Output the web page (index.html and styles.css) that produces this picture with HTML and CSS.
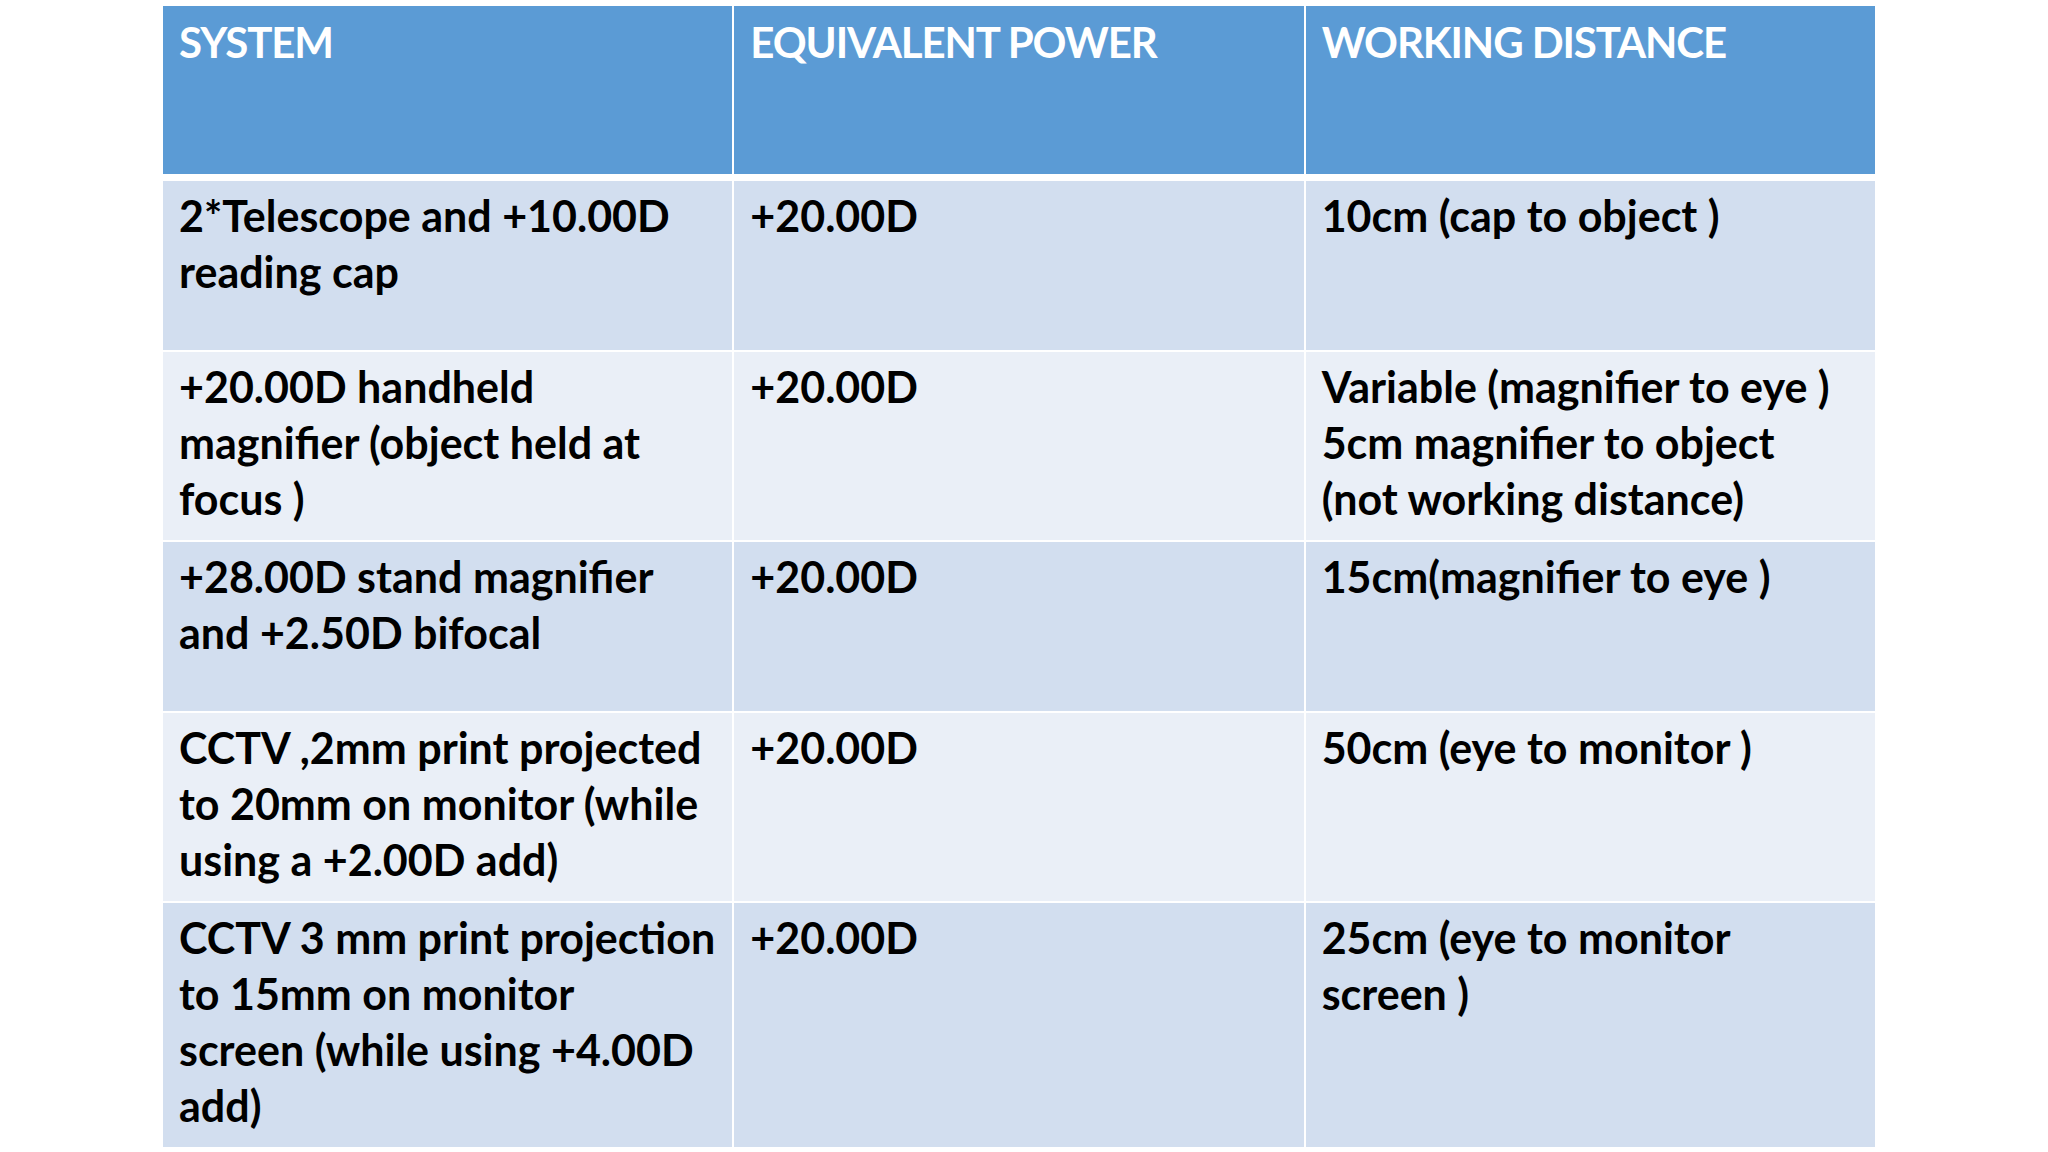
FILE: index.html
```html
<!DOCTYPE html>
<html lang="en">
<head>
<meta charset="utf-8">
<title>Magnification systems</title>
<link rel="stylesheet" href="styles.css">
</head>
<body>
<div class="table">
  <div class="grid thead">
    <div class="cell head">SYSTEM</div>
    <div class="cell head">EQUIVALENT POWER</div>
    <div class="cell head">WORKING DISTANCE</div>
  </div>
  <div class="grid tbody">
    <div class="cell band1">2*Telescope and +10.00D<br>reading cap</div>
    <div class="cell band1">+20.00D</div>
    <div class="cell band1">10cm (cap to object )</div>

    <div class="cell band2">+20.00D handheld<br>magnifier (object held at<br>focus )</div>
    <div class="cell band2">+20.00D</div>
    <div class="cell band2">Variable (magnifier to eye )<br>5cm magnifier to object<br>(not working distance)</div>

    <div class="cell band1">+28.00D stand magnifier<br>and +2.50D bifocal</div>
    <div class="cell band1">+20.00D</div>
    <div class="cell band1">15cm(magnifier to eye )</div>

    <div class="cell band2">CCTV ,2mm print projected<br>to 20mm on monitor (while<br>using a +2.00D add)</div>
    <div class="cell band2">+20.00D</div>
    <div class="cell band2">50cm (eye to monitor )</div>

    <div class="cell band1">CCTV 3 mm print projection<br>to 15mm on monitor<br>screen (while using +4.00D<br>add)</div>
    <div class="cell band1">+20.00D</div>
    <div class="cell band1">25cm (eye to monitor<br>screen )</div>
  </div>
</div>
</body>
</html>
```

FILE: styles.css
```css
html, body {
  margin: 0;
  padding: 0;
  background: #ffffff;
}

body {
  font-family: "Lato", "Open Sans", "Liberation Sans", sans-serif;
}

.table {
  margin: 6px 0 0 163px;
  width: 1712px;
  display: flex;
  flex-direction: column;
  gap: 7px;
}

.grid {
  display: grid;
  grid-template-columns: repeat(3, 1fr);
  grid-auto-rows: minmax(169px, auto);
  column-gap: 2px;
  row-gap: 2px;
}

.thead {
  grid-auto-rows: 168px;
}

.cell {
  padding: 7px 12px 13px 16px;
  font-size: 43px;
  line-height: 56px;
  font-weight: 700;
  color: #000000;
  white-space: nowrap;
}

.head {
  padding-top: 8px;
  background: #5b9bd5;
  color: #ffffff;
  font-size: 42px;
  letter-spacing: -1.1px;
}

.band1 {
  background: #d2deef;
}

.band2 {
  background: #eaeff7;
}
```
